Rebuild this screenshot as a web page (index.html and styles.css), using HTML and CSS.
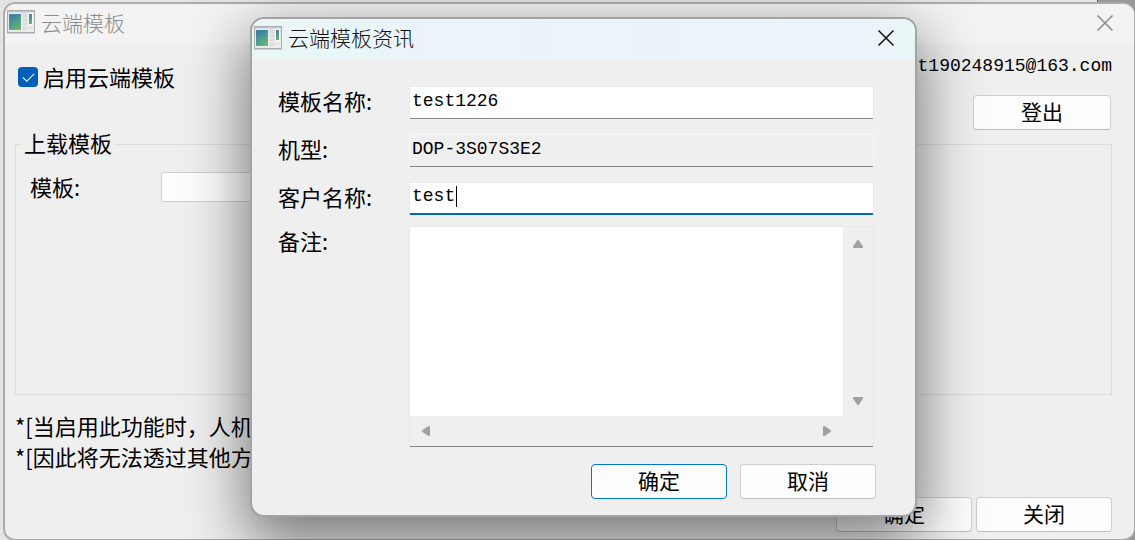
FILE: index.html
```html
<!DOCTYPE html>
<html lang="zh-CN">
  <head>
    <meta charset="UTF-8" />
    <title>云端模板</title>
    <link rel="stylesheet" href="styles.css">
  </head>
  <body>
    <svg width="0" height="0" class="defs">
      <defs>
        <linearGradient id="frame" x1="0" y1="0" x2="1" y2="1">
          <stop offset="0" stop-color="#d5d8dc" />
          <stop offset="1" stop-color="#f1f1f1" />
        </linearGradient>
        <linearGradient id="screen" x1="0" y1="0" x2="0.6" y2="1">
          <stop offset="0" stop-color="#4379a5" />
          <stop offset="0.5" stop-color="#4b9694" />
          <stop offset="1" stop-color="#65b56c" />
        </linearGradient>
        <symbol id="app-icon" viewBox="0 0 28 24">
          <rect x="0.5" y="0.5" width="27" height="22" fill="url(#frame)" stroke="#a9adb2" />
          <path d="M1 1.500h26" stroke="#bcc3cc" />
          <rect x="1.5" y="3.5" width="13" height="17" fill="#fafafa" />
          <rect x="2" y="4" width="12" height="16" fill="url(#screen)" />
          <path d="M2 10c4 0 8-2 12-5V4H2z" fill="#427ba8" opacity="0.5" />
          <path d="M16 4h4v3h-4zM16 9h4v2h-4zM16 13h4v2h-4zM16 17h4v3h-4z" fill="#dcdcdc" />
          <rect x="21" y="3" width="5" height="12" fill="#fafafa" />
          <rect x="22" y="4" width="3" height="10" fill="url(#screen)" />
          <path d="M21 17h5v2h-5z" fill="#e2e2e2" />
          <path d="M0 23.500h28" stroke="#999" opacity="0.4" />
        </symbol>
        <symbol id="close-icon" viewBox="0 0 16 16">
          <path d="M0.5 0.5l15 15M15.500 0.5l-15 15" fill="none" stroke="currentColor" stroke-width="1.5" />
        </symbol>
      </defs>
    </svg>

    <div class="backdrop"></div>
    <main class="window">
      <header class="titlebar">
        <svg class="app-icon"><use href="#app-icon" /></svg>
        <h1>云端模板</h1>
        <button class="close" type="button" aria-label="关闭窗口"><svg><use href="#close-icon" /></svg></button>
      </header>
      <div class="content">
        <div class="account">
          <div class="check">
            <input type="checkbox" id="enable" checked />
            <label for="enable">启用云端模板</label>
          </div>
          <div class="user">
            <span class="mail">t190248915@163.com</span>
            <button class="btn" type="button">登出</button>
          </div>
        </div>
        <fieldset class="group">
          <legend>上载模板</legend>
          <div class="template">
            <label for="template">模板:</label>
            <input type="text" id="template" />
          </div>
        </fieldset>
        <div class="notes">
          <p>*[当启用此功能时，人机</p>
          <p>*[因此将无法透过其他方</p>
        </div>
        <footer class="actions">
          <button class="btn" type="button">确定</button>
          <button class="btn" type="button">关闭</button>
        </footer>
      </div>
    </main>

    <div class="dialog" role="dialog" aria-labelledby="dialog_title">
      <header class="titlebar">
        <svg class="app-icon"><use href="#app-icon" /></svg>
        <h2 id="dialog_title">云端模板资讯</h2>
        <button class="close" type="button" aria-label="关闭对话框"><svg><use href="#close-icon" /></svg></button>
      </header>
      <form class="form">
        <div class="row">
          <label for="name">模板名称:</label>
          <input type="text" id="name" value="test1226" />
        </div>
        <div class="row">
          <label for="model">机型:</label>
          <input type="text" id="model" value="DOP-3S07S3E2" readonly />
        </div>
        <div class="row">
          <label for="customer">客户名称:</label>
          <div class="field">
            <input type="text" id="customer" class="active" value="test" />
            <span class="caret"></span>
          </div>
        </div>
        <div class="row memo-row">
          <label for="memo">备注:</label>
          <div class="memo">
            <textarea id="memo"></textarea>
            <div class="scroll vertical">
              <svg viewBox="0 0 12 10"><path d="M5 1.500Q6 .2 7 1.500L11 7.500Q11.500 9 10 9H2Q.5 9 1 7.500Z" /></svg>
              <svg viewBox="0 0 12 10"><path d="M5 8.500Q6 9.800 7 8.500L11 2.500Q11.500 1 10 1H2Q.5 1 1 2.500Z" /></svg>
            </div>
            <div class="scroll horizontal">
              <svg viewBox="0 0 10 12"><path d="M1.500 5Q.2 6 1.500 7L7.500 11Q9 11.500 9 10V2Q9 .5 7.500 1Z" /></svg>
              <svg viewBox="0 0 10 12"><path d="M8.500 5Q9.800 6 8.500 7L2.500 11Q1 11.500 1 10V2Q1 .5 2.500 1Z" /></svg>
            </div>
          </div>
        </div>
        <div class="actions">
          <button class="btn primary" type="button">确定</button>
          <button class="btn" type="button">取消</button>
        </div>
      </form>
    </div>
  </body>
</html>
```
FILE: styles.css
```css
* {
  box-sizing: border-box;
}
body {
  margin: 0;
  padding: 2px 0 0 3px;
  min-height: 100vh;
  position: relative;
  overflow: hidden;
  background-color: #e4e4e4;
  color: #000;
  font-family: "Noto Sans CJK SC", sans-serif;
  font-size: 22px;
  line-height: 28px;
}
.defs {
  position: absolute;
}
/* strip of the desktop right of the parent window */
.backdrop {
  position: absolute;
  top: 0;
  right: 0;
  bottom: 0;
  width: 38px;
  background-color: #999;
  border-left: 1px solid #555;
}
.window {
  position: relative;
  height: calc(100vh - 1px);
  display: flex;
  flex-direction: column;
  background-color: #efefef;
  border: 2px solid #acacac;
  border-right-width: 1px;
  border-radius: 12px;
  overflow: hidden;
}
.titlebar {
  display: flex;
  align-items: center;
  height: 40px;
  padding: 0 21px 0 2px;
  background-color: #f3f3f3;
  color: #8b8b8b;
}
.titlebar h1,
.titlebar h2 {
  flex: 1;
  margin: 0 0 0 6px;
  padding-bottom: 5px;
  font-size: 21px;
  font-weight: 300;
}
.app-icon {
  width: 28px;
  height: 24px;
  margin-bottom: 4px;
}
.close {
  display: flex;
  padding: 0 0 3px;
  border: none;
  background: none;
  color: inherit;
}
.close svg {
  width: 16px;
  height: 16px;
}
.content {
  flex: 1;
  display: flex;
  flex-direction: column;
  padding: 8px 22px 7px 10px;
}
.account {
  display: flex;
  justify-content: space-between;
  align-items: flex-start;
}
.check {
  display: flex;
  gap: 5px;
  padding: 10px 0 0 3px;
}
.check input {
  appearance: none;
  width: 20px;
  height: 20px;
  margin: 5px 0 0;
  border-radius: 4px;
  background-color: #005fb8;
  display: flex;
  align-items: center;
  justify-content: center;
}
.check input::before {
  content: "";
  width: 10px;
  height: 5px;
  margin-bottom: 3px;
  border: solid #fff;
  border-width: 0 0 1px 1px;
  transform: rotate(-45deg);
}
.user {
  display: flex;
  flex-direction: column;
  align-items: flex-end;
  gap: 15px;
}
.mail {
  font-family: "Liberation Mono", monospace;
  font-size: 18px;
}
.user .btn {
  width: 138px;
  margin-right: 1px;
}
.btn {
  width: 136px;
  height: 35px;
  padding: 0 0 3px;
  border: 1px solid #cfcfcf;
  border-bottom-color: #bdbdbd;
  border-radius: 4px;
  background-color: #fdfdfd;
  color: #000;
  font-family: inherit;
  font-size: 21px;
  line-height: 28px;
}
.group {
  height: 267px;
  margin: -2px 0 0;
  padding: 12px 14px;
  border: 1px solid #dcdcdc;
}
.group legend {
  margin-left: -8px;
  padding: 0 2px 4px;
}
.template {
  display: flex;
}
.template label {
  width: 131px;
}
.template input {
  width: 400px;
  height: 30px;
  border: 1px solid #cfcfcf;
  border-radius: 2px;
  background-color: #fdfdfd;
}
.notes {
  padding-top: 15px;
}
.notes p {
  margin: 0;
  line-height: 31px;
}
.actions {
  display: flex;
  justify-content: flex-end;
  gap: 4px;
}
.content .actions {
  margin-top: auto;
}

/* dialog */
.dialog {
  position: absolute;
  top: 17px;
  left: 250px;
  right: 218px;
  border: 2px solid #a3a3a3;
  border-radius: 14px;
  background-color: #efefef;
  box-shadow: 0 22px 60px 4px rgba(0, 0, 0, 0.5);
}
.dialog .titlebar {
  height: 41px;
  border-radius: 12px 12px 0 0;
  background: linear-gradient(90deg, #eaf6f6, #ebf3fb 50%, #eaf5f8);
  color: #111;
}
.form {
  padding: 26px 41px 16px 26px;
  display: flex;
  flex-direction: column;
  gap: 15px;
}
.row {
  display: grid;
  grid-template-columns: 131px 1fr;
}
.row input {
  width: 100%;
  height: 33px;
  padding: 0 2px 4px;
  border: 1px solid #e8e8e8;
  border-bottom-color: #858585;
  border-radius: 2px;
  outline: none;
  background-color: #fff;
  color: #000;
  font-family: "Liberation Mono", monospace;
  font-size: 18px;
}
.row input[readonly] {
  background-color: #efefef;
  border-color: #f8f8f8;
  border-bottom-color: #858585;
}
.row .active {
  border-bottom: 2px solid #0067c0;
}
.field {
  display: flex;
  position: relative;
}
.caret {
  position: absolute;
  left: 47px;
  top: 4px;
  width: 1px;
  height: 21px;
  background-color: #000;
}
.memo-row {
  margin-top: -4px;
}
.memo {
  display: grid;
  grid-template-columns: 1fr 30px;
  grid-template-rows: 189px 30px;
  border: 1px solid #e8e8e8;
  border-bottom-color: #858585;
  border-radius: 2px;
}
.memo textarea {
  padding: 2px;
  border: none;
  outline: none;
  resize: none;
  background-color: #fff;
  font-family: "Liberation Mono", monospace;
  font-size: 18px;
}
.scroll {
  display: flex;
  align-items: center;
  justify-content: space-between;
}
.scroll svg {
  fill: #a0a0a0;
}
.vertical {
  flex-direction: column;
  padding: 12px 0 10px;
}
.vertical svg {
  width: 12px;
  height: 10px;
}
.horizontal {
  padding: 0 11px;
}
.horizontal svg {
  width: 10px;
  height: 12px;
}
.form .actions {
  gap: 13px;
  margin: 2px -2px 0 0;
}
.primary {
  border-color: #0078d4;
}
```
